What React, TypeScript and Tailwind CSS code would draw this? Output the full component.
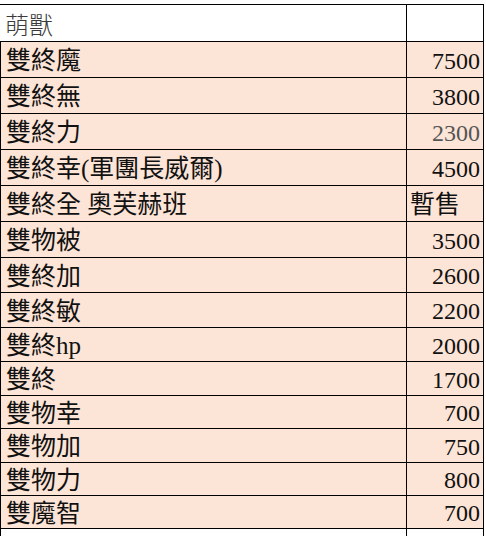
const rows: { name: string; value: string; h: number; tone?: 'light' | 'left' }[] = [
  { name: '雙終魔', value: '7500', h: 36 },
  { name: '雙終無', value: '3800', h: 36 },
  { name: '雙終力', value: '2300', h: 36, tone: 'light' },
  { name: '雙終幸(軍團長威爾)', value: '4500', h: 36 },
  { name: '雙終全 奧芙赫班', value: '暫售', h: 36, tone: 'left' },
  { name: '雙物被', value: '3500', h: 36 },
  { name: '雙終加', value: '2600', h: 35 },
  { name: '雙終敏', value: '2200', h: 35 },
  { name: '雙終hp', value: '2000', h: 34 },
  { name: '雙終', value: '1700', h: 34 },
  { name: '雙物幸', value: '700', h: 33 },
  { name: '雙物加', value: '750', h: 34 },
  { name: '雙物力', value: '800', h: 33 },
  { name: '雙魔智', value: '700', h: 33 },
];

const font = { fontFamily: "'Liberation Serif', 'Noto Sans CJK TC', serif" };

const App = () => {
  return (
    <div className="w-[486px] h-[536px] overflow-hidden bg-white pt-[4px]" style={font}>
      <div className="w-[484px] border-t border-black">
        <div className="flex h-[37px] border-b border-black">
          <div className="w-[407px] border-r border-black flex items-center pl-[5px] pt-[6px] text-[24px] leading-none font-light text-[#3a3a3a]">
            萌獸
          </div>
          <div className="w-[77px] border-r border-black" />
        </div>
        {rows.map((row) => (
          <div
            key={row.name}
            className="flex border-b border-black bg-[#fce4d6]"
            style={{ height: row.h }}
          >
            <div className="w-[407px] border-l border-r border-black flex items-center pl-[5px] pt-[2px] text-[25px] leading-none text-[#111]">
              {row.name}
            </div>
            <div
              className={
                row.tone === 'left'
                  ? 'w-[77px] border-r border-black flex items-center justify-start pl-[3px] pt-[2px] text-[25px] leading-none text-[#111]'
                  : row.tone === 'light'
                  ? 'w-[77px] border-r border-black flex items-center justify-end pr-[3px] pt-[2px] text-[24px] leading-none text-[#555]'
                  : 'w-[77px] border-r border-black flex items-center justify-end pr-[3px] pt-[2px] text-[24px] leading-none text-[#111]'
              }
            >
              {row.value}
            </div>
          </div>
        ))}
        <div className="flex h-[40px]">
          <div className="w-[407px] border-l border-r border-black" />
          <div className="w-[77px] border-r border-black" />
        </div>
      </div>
    </div>
  );
};

export default App;
